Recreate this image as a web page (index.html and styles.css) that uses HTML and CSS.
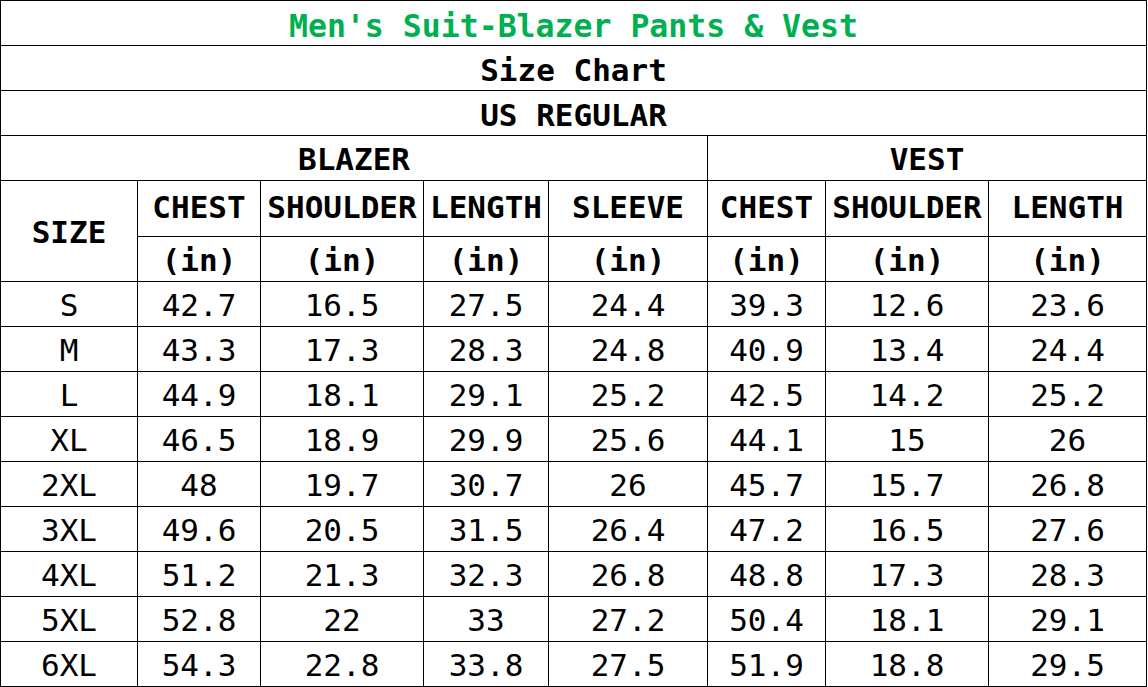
FILE: index.html
```html
<!DOCTYPE html>
<html lang="en">
<head>
<meta charset="utf-8">
<title>Men's Suit-Blazer Pants &amp; Vest Size Chart</title>
<link rel="stylesheet" href="styles.css">
</head>
<body>
<div class="chart">
  <div class="cell full title">Men's Suit-Blazer Pants &amp; Vest</div>
  <div class="cell full head banner">Size Chart</div>
  <div class="cell full head banner">US REGULAR</div>
  <div class="cell blazer head">BLAZER</div>
  <div class="cell vest head">VEST</div>
  <div class="cell size head">SIZE</div>
  <div class="cell head col">CHEST</div>
  <div class="cell head col">SHOULDER</div>
  <div class="cell head col">LENGTH</div>
  <div class="cell head col">SLEEVE</div>
  <div class="cell head col">CHEST</div>
  <div class="cell head col">SHOULDER</div>
  <div class="cell head col">LENGTH</div>
  <div class="cell head unit">(in)</div>
  <div class="cell head unit">(in)</div>
  <div class="cell head unit">(in)</div>
  <div class="cell head unit">(in)</div>
  <div class="cell head unit">(in)</div>
  <div class="cell head unit">(in)</div>
  <div class="cell head unit">(in)</div>

  <div class="cell label">S</div><div class="cell">42.7</div><div class="cell">16.5</div><div class="cell">27.5</div><div class="cell">24.4</div><div class="cell">39.3</div><div class="cell">12.6</div><div class="cell">23.6</div>
  <div class="cell label">M</div><div class="cell">43.3</div><div class="cell">17.3</div><div class="cell">28.3</div><div class="cell">24.8</div><div class="cell">40.9</div><div class="cell">13.4</div><div class="cell">24.4</div>
  <div class="cell label">L</div><div class="cell">44.9</div><div class="cell">18.1</div><div class="cell">29.1</div><div class="cell">25.2</div><div class="cell">42.5</div><div class="cell">14.2</div><div class="cell">25.2</div>
  <div class="cell label">XL</div><div class="cell">46.5</div><div class="cell">18.9</div><div class="cell">29.9</div><div class="cell">25.6</div><div class="cell">44.1</div><div class="cell">15</div><div class="cell">26</div>
  <div class="cell label">2XL</div><div class="cell">48</div><div class="cell">19.7</div><div class="cell">30.7</div><div class="cell">26</div><div class="cell">45.7</div><div class="cell">15.7</div><div class="cell">26.8</div>
  <div class="cell label">3XL</div><div class="cell">49.6</div><div class="cell">20.5</div><div class="cell">31.5</div><div class="cell">26.4</div><div class="cell">47.2</div><div class="cell">16.5</div><div class="cell">27.6</div>
  <div class="cell label">4XL</div><div class="cell">51.2</div><div class="cell">21.3</div><div class="cell">32.3</div><div class="cell">26.8</div><div class="cell">48.8</div><div class="cell">17.3</div><div class="cell">28.3</div>
  <div class="cell label">5XL</div><div class="cell">52.8</div><div class="cell">22</div><div class="cell">33</div><div class="cell">27.2</div><div class="cell">50.4</div><div class="cell">18.1</div><div class="cell">29.1</div>
  <div class="cell label">6XL</div><div class="cell">54.3</div><div class="cell">22.8</div><div class="cell">33.8</div><div class="cell">27.5</div><div class="cell">51.9</div><div class="cell">18.8</div><div class="cell">29.5</div>
</div>
</body>
</html>
```

FILE: styles.css
```css
html, body {
  margin: 0;
  padding: 0;
  background: #ffffff;
}

.chart {
  display: grid;
  grid-template-columns: 136px 122px 162px 124px 158px 117px 162px 157px;
  grid-template-rows: repeat(4, 44px) 55px repeat(10, 44px);
  gap: 1px;
  width: max-content;
  background: #000000;
  border: 1px solid #000000;
  font-family: "DejaVu Sans Mono", "Liberation Mono", monospace;
  font-size: 31px;
  color: #000000;
}

.cell {
  background: #ffffff;
  display: flex;
  align-items: center;
  justify-content: center;
  padding-top: 2px;
  box-sizing: border-box;
  white-space: nowrap;
  line-height: 1;
}

.full {
  grid-column: 1 / -1;
}

.title {
  color: #00b050;
  font-weight: bold;
  font-size: 31.5px;
  padding-top: 7px;
}

.banner {
  padding-top: 5px;
}

.head {
  font-weight: bold;
}

.blazer {
  grid-column: 1 / 6;
  padding-top: 3px;
}

.vest {
  grid-column: 6 / 9;
  padding-top: 3px;
}

.size {
  grid-row: span 2;
}

.col {
  padding-top: 0;
  padding-bottom: 2px;
}

.unit {
  font-weight: bold;
  padding-top: 3px;
}
```
